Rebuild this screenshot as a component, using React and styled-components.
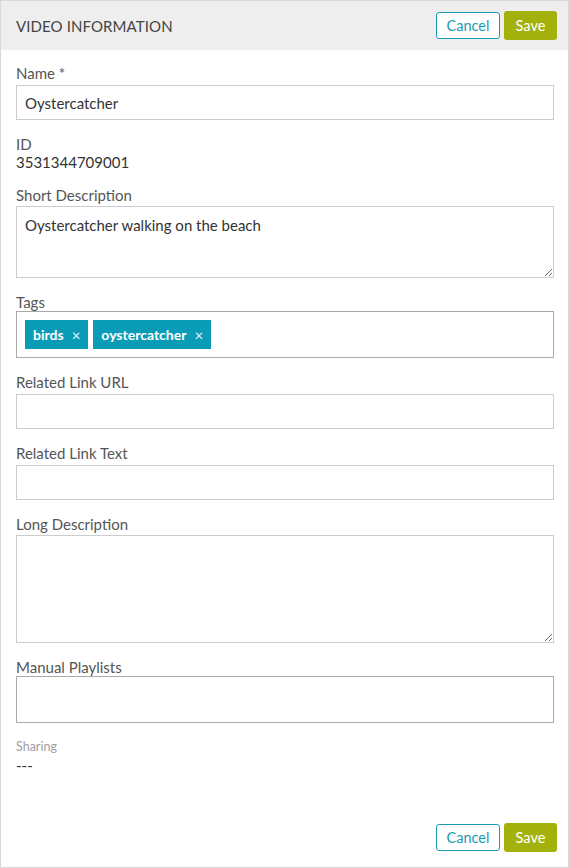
import React from "react";
import styled, { createGlobalStyle } from "styled-components";

const TAGS = ["birds", "oystercatcher"];

function App() {
  const [name, setName] = React.useState("Oystercatcher");
  const [shortDesc, setShortDesc] = React.useState("Oystercatcher walking on the beach");

  return (
    <>
      <Global />
      <Panel>
        <Header>
          <Title>VIDEO INFORMATION</Title>
          <Actions>
            <Cancel>Cancel</Cancel>
            <Save>Save</Save>
          </Actions>
        </Header>

        <Body>
          <Field>
            <Label space={3}>Name *</Label>
            <Input value={name} onChange={(e) => setName(e.target.value)} />
          </Field>

          <Field>
            <Label space={0}>ID</Label>
            <Value>3531344709001</Value>
          </Field>

          <Field>
            <Label space={2}>Short Description</Label>
            <TextArea
              rows={3}
              value={shortDesc}
              onChange={(e) => setShortDesc(e.target.value)}
              height={72}
            />
          </Field>

          <Field>
            <Label space={0}>Tags</Label>
            <TagBox>
              {TAGS.map((tag) => (
                <Tag key={tag}>
                  {tag}
                  <Remove>×</Remove>
                </Tag>
              ))}
            </TagBox>
          </Field>

          <Field>
            <Label space={3}>Related Link URL</Label>
            <Input />
          </Field>

          <Field>
            <Label space={3}>Related Link Text</Label>
            <Input />
          </Field>

          <Field>
            <Label space={2}>Long Description</Label>
            <TextArea height={108} />
          </Field>

          <Field>
            <Label space={0}>Manual Playlists</Label>
            <TagBox />
          </Field>

          <Field>
            <SmallLabel>Sharing</SmallLabel>
            <Value>---</Value>
          </Field>
        </Body>

        <Footer>
          <Cancel>Cancel</Cancel>
          <Save>Save</Save>
        </Footer>
      </Panel>
    </>
  );
}

const Global = createGlobalStyle`
    * { box-sizing: border-box; }
    body {
        margin: 0;
        font-family: Lato, "Open Sans", sans-serif;
        color: #333;
        background: #fff;
    }
`;

const Panel = styled.div`
    height: 868px;
    border: 1px solid #d9d9d9;
    display: flex;
    flex-direction: column;
    background: #fff;
`;

const Header = styled.div`
    height: 49px;
    background-color: #eeeeee;
    display: flex;
    align-items: center;
    justify-content: space-between;
    padding: 0 11px 0 15px;
`;

const Title = styled.div`
    font-size: 15px;
    color: #444;
    letter-spacing: 0.1px;
`;

const Actions = styled.div`
    display: flex;
    align-items: center;
    gap: 4px;
`;

const Cancel = styled.button`
    font-family: inherit;
    font-size: 14.5px;
    height: 27px;
    width: 64px;
    padding: 0;
    color: #1b9cb4;
    background: #fff;
    border: 1px solid #1b9cb4;
    border-radius: 3px;
`;

const Save = styled.button`
    font-family: inherit;
    font-size: 14.5px;
    height: 29px;
    width: 53px;
    padding: 0;
    color: #fff;
    background: #a3b10d;
    border: none;
    border-radius: 3px;
`;

const Body = styled.div`
    padding: 14px 14px 0 15px;
    display: flex;
    flex-direction: column;
    gap: 15px;
`;

const Field = styled.div`
    display: flex;
    flex-direction: column;
`;

const Label = styled.label`
    font-size: 15px;
    line-height: 18px;
    color: #555;
    margin-bottom: ${(p) => p.space}px;
`;

const SmallLabel = styled.div`
    font-size: 12.5px;
    line-height: 15px;
    color: #a0a0a0;
    margin-top: 1px;
    margin-bottom: 2px;
`;

const Value = styled.div`
    font-size: 15px;
    line-height: 18px;
    color: #333;
`;

const Input = styled.input`
    height: 35px;
    width: 100%;
    border: 1px solid #ccc;
    padding: 0 8px;
    font-family: inherit;
    font-size: 15px;
    color: #333;
    outline: none;
`;

const TextArea = styled.textarea`
    height: ${(p) => p.height}px;
    width: 100%;
    border: 1px solid #ccc;
    padding: 8px;
    font-family: inherit;
    font-size: 15px;
    line-height: 20px;
    color: #333;
    resize: vertical;
    outline: none;
    display: block;
`;

const TagBox = styled.div`
    height: 47px;
    border: 1px solid #aaa;
    padding: 8px 8px;
    display: flex;
    gap: 5px;
    align-items: flex-start;
`;

const Tag = styled.span`
    height: 29px;
    background: #0a9cb6;
    color: #fff;
    font-weight: bold;
    font-size: 14px;
    display: inline-flex;
    align-items: center;
    padding: 0 8px;
    gap: 8px;
`;

const Remove = styled.span`
    font-weight: normal;
    font-size: 15px;
    opacity: 0.9;
`;

const Footer = styled.div`
    margin-top: auto;
    display: flex;
    justify-content: flex-end;
    align-items: center;
    gap: 4px;
    padding: 0 11px 15px 0;
`;

export default App;
